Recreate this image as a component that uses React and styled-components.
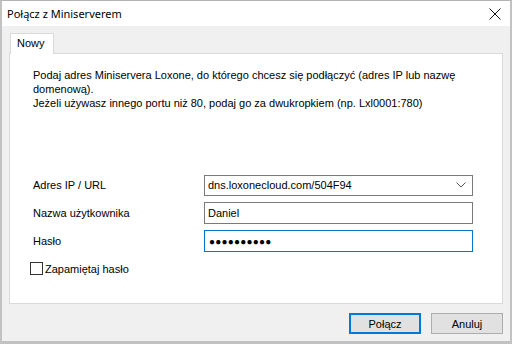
import styled, { createGlobalStyle } from 'styled-components';

const Global = createGlobalStyle`
  html, body { margin: 0; padding: 0; background: #ffffff; }
  * { box-sizing: border-box; }
`

const Window = styled.div`
  width: 512px;
  height: 344px;
  display: flex;
  flex-direction: column;
  border-top: 1px solid #b4b4b4;
  border-left: 2px solid #c2c2c2;
  border-right: 2px solid #c2c2c2;
  border-bottom: 3px solid #c2c2c2;
  font-family: "Liberation Sans", Arial, sans-serif;
  font-size: 11px;
  color: #000;
`

const TitleBar = styled.div`
  height: 25px;
  background: #fff;
  display: flex;
  align-items: center;
  justify-content: space-between;
  padding: 0 9px 0 5px;
  font-family: "Noto Sans", "Open Sans", sans-serif;
  font-size: 11px;
`

const Body = styled.div`
  flex: 1;
  background: #f0f0f0;
  display: flex;
  flex-direction: column;
  padding: 7px 7px 0 7px;
`

const TabStrip = styled.div`
  display: flex;
  padding-left: 1px;
  height: 20px;
`

const Tab = styled.div`
  width: 44px;
  height: 21px;
  background: #fff;
  border: 1px solid #d9d9d9;
  border-bottom: none;
  padding: 3px 0 0 6px;
  position: relative;
  z-index: 1;
`

const Panel = styled.div`
  width: 494px;
  height: 251px;
  background: #fff;
  border: 1px solid #d9d9d9;
  padding: 14px 0 0 23px;
  display: flex;
  flex-direction: column;
`

const Intro = styled.p`
  margin: 0;
  line-height: 14px;
`

const Form = styled.div`
  margin-top: 64px;
  display: grid;
  grid-template-columns: 171px 269px;
  row-gap: 6px;
  align-items: center;
`

const Label = styled.div`
  line-height: 22px;
`

const Field = styled.div`
  height: ${p => p.$h || 22}px;
  border: 1px solid ${p => (p.$focus ? '#0078d7' : '#7a7a7a')};
  background: #fff;
  display: flex;
  align-items: center;
  justify-content: space-between;
  padding: 0 6px 0 3px;
  white-space: nowrap;
`

const Dots = styled.span`
  font-size: 10px;
  letter-spacing: 0.2px;
  padding-left: 1px;
`

const CheckRow = styled.label`
  display: flex;
  align-items: center;
  gap: 2px;
  margin: 10px 0 0 -3px;
`

const Box = styled.span`
  width: 13px;
  height: 13px;
  border: 1px solid #333;
  background: #fff;
`

const Buttons = styled.div`
  display: flex;
  justify-content: flex-end;
  gap: 10px;
  padding: 9px 0 0 0;
`

const Button = styled.div`
  width: 72px;
  height: 21px;
  background: #e1e1e1;
  border: ${p => (p.$primary ? '2px solid #0078d7' : '1px solid #adadad')};
  display: flex;
  align-items: center;
  justify-content: center;
`

function App() {
  return (
    <>
      <Global />
      <Window>
        <TitleBar>
          <span>Połącz z Miniserverem</span>
          <svg width="12" height="12" viewBox="0 0 12 12">
            <path d="M0.5 0.5 L11.5 11.5 M11.5 0.5 L0.5 11.5" stroke="#111" strokeWidth="1" fill="none" />
          </svg>
        </TitleBar>
        <Body>
          <TabStrip>
            <Tab>Nowy</Tab>
          </TabStrip>
          <Panel>
            <Intro>
              Podaj adres Miniservera Loxone, do którego chcesz się podłączyć (adres IP lub nazwę<br />
              domenową).<br />
              Jeżeli używasz innego portu niż 80, podaj go za dwukropkiem (np. Lxl0001:780)
            </Intro>
            <Form>
              <Label>Adres IP / URL</Label>
              <Field $h={21}>
                <span>dns.loxonecloud.com/504F94</span>
                <svg width="10" height="6" viewBox="0 0 10 6">
                  <path d="M0.5 0.5 L5 5 L9.5 0.5" stroke="#555" strokeWidth="1" fill="none" />
                </svg>
              </Field>
              <Label>Nazwa użytkownika</Label>
              <Field>Daniel</Field>
              <Label>Hasło</Label>
              <Field $focus>
                <Dots>●●●●●●●●●●</Dots>
              </Field>
            </Form>
            <CheckRow>
              <Box />
              <span>Zapamiętaj hasło</span>
            </CheckRow>
          </Panel>
          <Buttons>
            <Button $primary>Połącz</Button>
            <Button>Anuluj</Button>
          </Buttons>
        </Body>
      </Window>
    </>
  );
}

export default App;
